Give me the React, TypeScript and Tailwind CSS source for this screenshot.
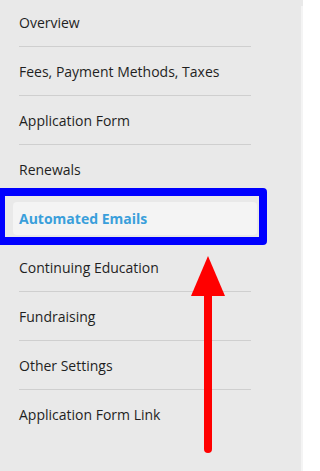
const items = [
  'Overview',
  'Fees, Payment Methods, Taxes',
  'Application Form',
  'Renewals',
  'Automated Emails',
  'Continuing Education',
  'Fundraising',
  'Other Settings',
  'Application Form Link',
];

const ACTIVE = 'Automated Emails';

export default function App() {
  return (
    <div
      className="relative flex h-[471px] w-[303px] overflow-hidden bg-[#e9e9e9]"
      style={{ fontFamily: '"Open Sans", "Liberation Sans", sans-serif' }}
    >
      <nav className="flex-1">
        <ul className="ml-[19px] -mt-[2px] w-[232px]">
          {items.map((label, i) => (
            <li
              key={label}
              className={
                label === ACTIVE || i === items.length - 1
                  ? 'flex h-[49px] items-center'
                  : 'flex h-[49px] items-center border-b border-[#cfcfcf]'
              }
            >
              {label === ACTIVE ? (
                // Highlighted item, with the blue annotation frame round it
                <div className="relative -ml-[6px] -mr-[6px] flex h-[33px] flex-1 items-center rounded-[4px] bg-[#f4f4f4] pl-[6px]">
                  <span className="text-[14px] font-bold text-[#3a9fdb]">
                    {label}
                  </span>
                  <div className="pointer-events-none absolute -top-[14px] -bottom-[10px] -left-[16px] -right-[10px] rounded-[4px] border-[8px] border-[#0000ff]" />
                </div>
              ) : (
                <span className="text-[14px] text-[#1f1f1f]">{label}</span>
              )}
            </li>
          ))}
        </ul>
      </nav>
      <div className="mt-[6px] w-[2px] bg-[#f4f4f4]" />

      {/* red arrow annotation */}
      <svg
        className="pointer-events-none absolute left-0 top-0"
        width="303"
        height="471"
        viewBox="0 0 303 471"
      >
        <polygon points="208,256 191,296 225,296" fill="#ff0000" />
        <line
          x1="208"
          y1="294"
          x2="208"
          y2="449"
          stroke="#ff0000"
          strokeWidth="8"
          strokeLinecap="round"
        />
      </svg>
    </div>
  );
}
